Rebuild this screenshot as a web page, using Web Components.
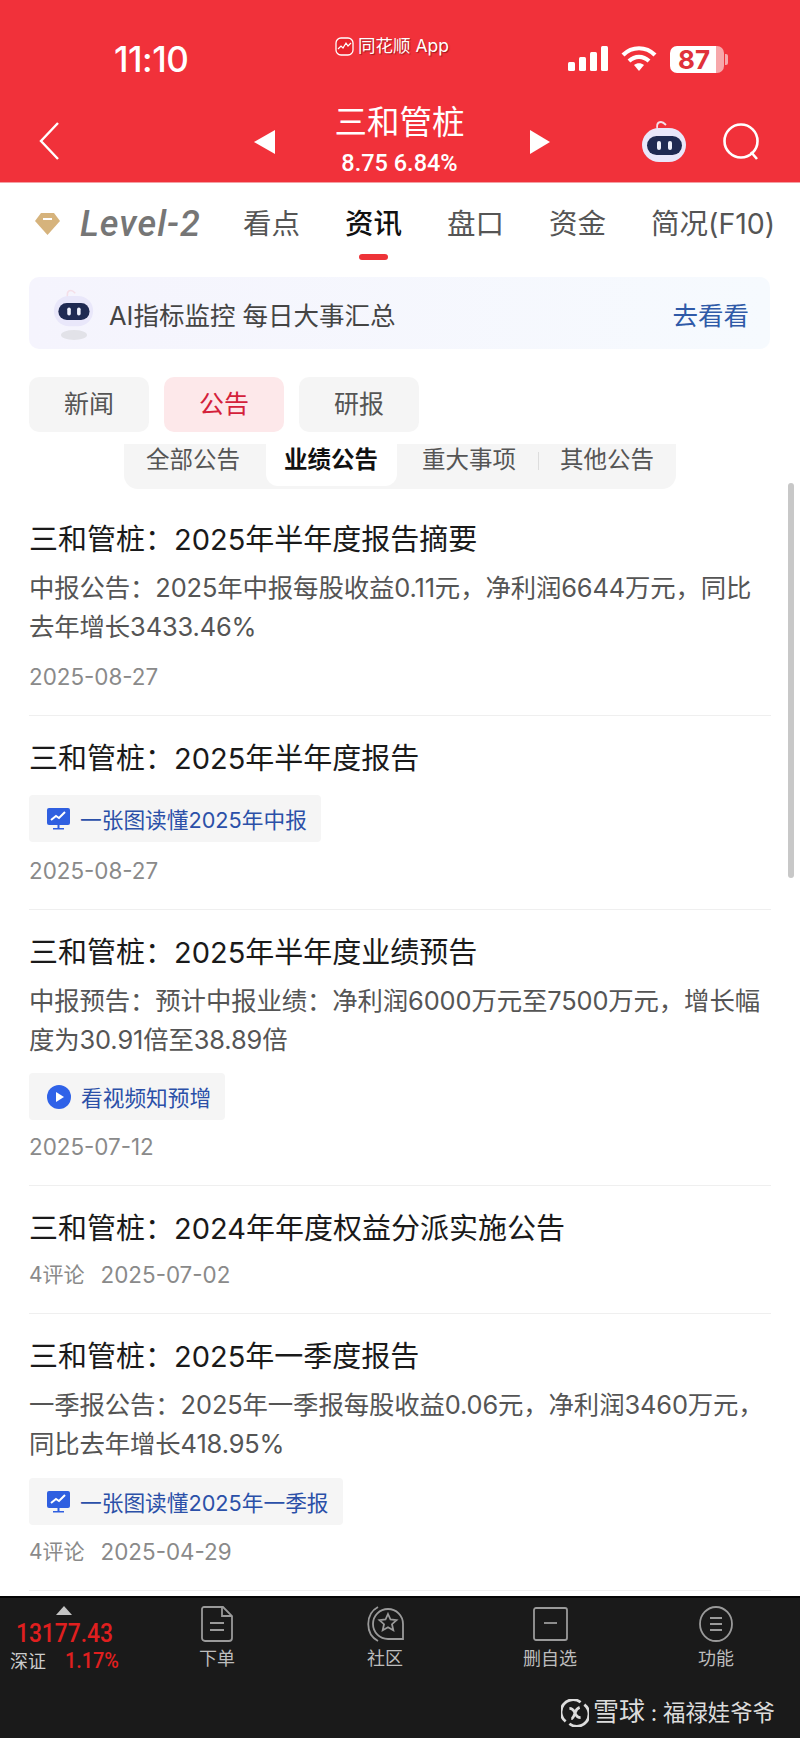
<!DOCTYPE html>
<html lang="zh">
<head>
<meta charset="utf-8">
<title>三和管桩</title>
<style>
  html, body { margin: 0; padding: 0; background: #fff; }
  body { font-family: "Inter", "Noto Sans CJK SC", sans-serif; width: 800px; height: 1738px; overflow: hidden; }
</style>
</head>
<body>
<stock-page>
  <app-header slot="top"></app-header>
  <stock-tabs slot="top"></stock-tabs>
  <ai-banner slot="top"></ai-banner>
  <kind-pills slot="top"></kind-pills>
  <notice-tabs slot="top"></notice-tabs>

  <notice-item heading="三和管桩：2025年半年度报告摘要" date="2025-08-27" gap="16">
    <span slot="desc">中报公告：2025年中报每股收益0.11元，净利润6644万元，同比去年增长3433.46%</span>
  </notice-item>
  <notice-item heading="三和管桩：2025年半年度报告" date="2025-08-27" gap="14">
    <notice-tag slot="tag" icon="chart" style="--top:16px">一张图读懂2025年中报</notice-tag>
  </notice-item>
  <notice-item heading="三和管桩：2025年半年度业绩预告" date="2025-07-12" gap="12">
    <span slot="desc">中报预告：预计中报业绩：净利润6000万元至7500万元，增长幅度为30.91倍至38.89倍</span>
    <notice-tag slot="tag" icon="play" style="--top:14px">看视频知预增</notice-tag>
  </notice-item>
  <notice-item heading="三和管桩：2024年年度权益分派实施公告" comments="4评论" date="2025-07-02" gap="11"></notice-item>
  <notice-item heading="三和管桩：2025年一季度报告" comments="4评论" date="2025-04-29" gap="12">
    <span slot="desc">一季报公告：2025年一季报每股收益0.06元，净利润3460万元，同比去年增长418.95%</span>
    <notice-tag slot="tag" icon="chart" style="--top:15px">一张图读懂2025年一季报</notice-tag>
  </notice-item>

  <bottom-bar slot="bottom"></bottom-bar>
</stock-page>

<script>
const ROBOT = `
  <svg viewBox="0 0 46 46" width="100%" height="100%">
    <path d="M17 13c-2-5-1-9 3-9 2 0 3 1 5 3" fill="none" stroke="#f4dfe8" stroke-width="1.800"/>
    <rect x="1" y="10" width="44" height="34" rx="17" fill="#e9e7fa"/>
    <rect x="6" y="18" width="35" height="19" rx="9.500" fill="#1f2a52"/>
    <rect x="16" y="23" width="4" height="9" rx="2" fill="#eef0fb"/>
    <rect x="27" y="23" width="4" height="9" rx="2" fill="#eef0fb"/>
  </svg>`;

class StockPage extends HTMLElement {
  constructor() {
    super();
    this.attachShadow({ mode: "open" });
    this.shadowRoot.innerHTML = `
      <style>
        :host { display: flex; flex-direction: column; width: 800px; height: 1738px; position: relative; color: #1a1a1a; }
        .list { flex: 1; min-height: 0; overflow: hidden; padding-top: 8px; }
        .scroll { position: absolute; left: 788px; top: 483px; width: 6px; height: 395px; border-radius: 3px; background: #c8c8c8; }
      </style>
      <slot name="top"></slot>
      <div class="list"><slot></slot></div>
      <slot name="bottom"></slot>
      <div class="scroll"></div>
    `;
  }
}

class AppHeader extends HTMLElement {
  constructor() {
    super();
    this.attachShadow({ mode: "open" });
    this.shadowRoot.innerHTML = `
      <style>
        :host { display: block; height: 182px; background: #f1313a; color: #fff; border-bottom: 1px solid #f4a0a4; box-sizing: content-box; position: relative; }
        .status { display: flex; align-items: center; height: 60px; padding-top: 29px; padding-left: 114px; padding-right: 76px; }
        .time { font: 500 35px/1 "Inter", sans-serif; letter-spacing: -.5px; }
        .app { position: absolute; left: 335px; top: 35px; display: flex; align-items: center; gap: 4px; font-size: 17.5px; line-height: 22px; text-shadow: 1px 1px 1px rgba(90,0,0,.55); }
        .icons { margin-left: auto; display: flex; align-items: center; gap: 13px; }
        .batt { position: relative; width: 54px; height: 27px; border-radius: 7px; background: linear-gradient(90deg, #fff 0 86%, #f7a7aa 86%); color: #e0313a; font: 700 26px/27px "Inter", sans-serif; padding-right: 6px; box-sizing: border-box; text-align: center; }
        .batt::after { content: ""; position: absolute; right: -4px; top: 8px; width: 3px; height: 11px; border-radius: 0 2px 2px 0; background: #f7a7aa; }
        .nav { position: absolute; left: 0; right: 0; top: 102px; height: 76px; display: grid; grid-template-columns: 254px 21px 60px 129px 66px 20px 91px 45px 37px 37px; align-items: center; }
        .name { display: flex; flex-direction: column; align-items: center; white-space: nowrap; }
        .name b { font-weight: 400; font-size: 32.5px; line-height: 40px; }
        .name span { font: 500 23.5px/28px "Roboto", sans-serif; margin-top: 6px; }
        svg { display: block; }
        .back { margin-left: 38px; margin-top: 2px; }
        .tri { margin-top: 3px; }
        .bot { width: 46px; height: 46px; margin-top: 2px; }
        .find { margin-top: 3px; }
      </style>
      <div class="status">
        <span class="time">11:10</span>
        <div class="app">
          <svg width="19" height="19" viewBox="0 0 19 19"><rect x="1" y="1" width="17" height="17" rx="5" fill="#e8232c" stroke="#fff" stroke-width="1.3"/><path d="M3 12l3-3 2 2 3-5 2 3 3-3" fill="none" stroke="#fff" stroke-width="1.2"/></svg>
          <span>同花顺 App</span>
        </div>
        <div class="icons">
          <svg width="40" height="26" viewBox="0 0 40 26" fill="#fff"><rect x="0" y="16" width="7" height="9" rx="1.5"/><rect x="11" y="11" width="7" height="14" rx="1.5"/><rect x="22" y="6" width="7" height="19" rx="1.5"/><rect x="33" y="0" width="7" height="25" rx="1.5"/></svg>
          <svg width="36" height="26" viewBox="0 0 36 26" fill="none" stroke="#fff" stroke-width="4.2"><path d="M2 9c9-9 23-9 32 0"/><path d="M8 15c6-5.500 14-5.500 20 0"/><path d="M18 25l-5-6c3-2.500 7-2.500 10 0z" fill="#fff" stroke="none"/></svg>
          <div class="batt">87</div>
        </div>
      </div>
      <div class="nav">
        <svg class="back" width="22" height="38" viewBox="0 0 22 38" fill="none" stroke="#fff" stroke-width="2.4"><path d="M20 1L3 19l17 18"/></svg>
        <svg class="tri" width="21" height="24" viewBox="0 0 21 24" fill="#fff"><path d="M21 0v24L0 12z"/></svg>
        <span></span>
        <div class="name"><b>三和管桩</b><span>8.75 6.84%</span></div>
        <span></span>
        <svg class="tri" width="20" height="24" viewBox="0 0 20 24" fill="#fff"><path d="M0 0v24l20-12z"/></svg>
        <span></span>
        <div class="bot">${ROBOT}</div>
        <span></span>
        <svg class="find" width="37" height="38" viewBox="0 0 37 38" fill="none" stroke="#fff" stroke-width="2.6"><circle cx="18" cy="18" r="16.500"/><path d="M28 29l6 7"/></svg>
      </div>
    `;
  }
}

class StockTabs extends HTMLElement {
  constructor() {
    super();
    this.attachShadow({ mode: "open" });
    this.shadowRoot.innerHTML = `
      <style>
        :host { display: flex; align-items: flex-start; height: 73px; padding-left: 35px; font-size: 28.5px; color: #555; box-sizing: border-box; white-space: nowrap; }
        .lv { display: flex; align-items: center; gap: 20px; width: 208px; height: 82px; }
        .lv i { font: italic 500 36px/1 "Roboto", sans-serif; color: #767676; letter-spacing: 1px; }
        .tab { width: 102px; height: 82px; line-height: 82px; position: relative; flex: none; }
        .tab.on { color: #111; font-weight: 500; }
        .tab.on::after { content: ""; position: absolute; left: 14px; top: 71px; width: 29px; height: 6px; border-radius: 3px; background: #ee3338; }
      </style>
      <div class="lv">
        <svg width="25" height="22" viewBox="0 0 25 22"><path d="M6 0h13l6 8-12.500 14L0 8z" fill="#d6b37c"/><rect x="8" y="5" width="9" height="2" fill="#fff"/></svg>
        <i>Level-2</i>
      </div>
      <span class="tab">看点</span>
      <span class="tab on">资讯</span>
      <span class="tab">盘口</span>
      <span class="tab">资金</span>
      <span class="tab">简况(F10)</span>
    `;
  }
}

class AiBanner extends HTMLElement {
  constructor() {
    super();
    this.attachShadow({ mode: "open" });
    this.shadowRoot.innerHTML = `
      <style>
        :host { display: flex; align-items: center; height: 72px; margin: 21px 30px 0 29px; padding: 0 21px 0 24px; border-radius: 10px; background: linear-gradient(90deg, #f5f4fd, #f6fafe); font-size: 25.5px; color: #444; }
        .bot { width: 41px; height: 54px; margin-right: 15px; margin-top: 2px; display: flex; flex-direction: column; align-items: center; }
        .bot div { width: 41px; height: 41px; }
        .bot span { width: 26px; height: 10px; margin-top: 2px; border-radius: 50%; background: #e2e2e8; }
        a { margin-left: auto; color: #2f5aa8; }
      </style>
      <div class="bot"><div>${ROBOT}</div><span></span></div>
      <span>AI指标监控 每日大事汇总</span>
      <a>去看看</a>
    `;
  }
}

class KindPills extends HTMLElement {
  constructor() {
    super();
    this.attachShadow({ mode: "open" });
    this.shadowRoot.innerHTML = `
      <style>
        :host { display: flex; gap: 15px; margin: 28px 0 0 29px; }
        span { width: 120px; height: 55px; line-height: 55px; text-align: center; border-radius: 10px; background: #f5f5f5; color: #555; font-size: 25px; }
        .on { background: #fde8ea; color: #d4213a; }
      </style>
      <span>新闻</span><span class="on">公告</span><span>研报</span>
    `;
  }
}

class NoticeTabs extends HTMLElement {
  constructor() {
    super();
    this.attachShadow({ mode: "open" });
    this.shadowRoot.innerHTML = `
      <style>
        :host { display: grid; grid-template-columns: repeat(4, 138px); width: 552px; height: 45px; margin: 12px 0 0 124px; border-radius: 0 0 14px 14px; background: #f5f5f5; font-size: 23.5px; color: #555; position: relative; }
        span { text-align: center; line-height: 32px; height: 42px; }
        .on { margin: 0 3.500px; background: #fff; border-radius: 0 0 12px 12px; color: #111; font-weight: 700; }
        .sep { position: absolute; left: 414px; top: 8px; width: 1px; height: 18px; background: #ddd; }
      </style>
      <span>全部公告</span><span class="on">业绩公告</span><span>重大事项</span><span>其他公告</span>
      <div class="sep"></div>
    `;
  }
}

class NoticeTag extends HTMLElement {
  constructor() {
    super();
    this.attachShadow({ mode: "open" });
    const chart = `<svg width="23" height="22" viewBox="0 0 23 22"><path d="M2 0h19a2 2 0 0 1 2 2v13a2 2 0 0 1-2 2H2a2 2 0 0 1-2-2V2a2 2 0 0 1 2-2z" fill="#2f5fe0"/><path d="M4 12l5-4 3 2 6-6" fill="none" stroke="#fff" stroke-width="2"/><path d="M10.500 17h2v3h-2zM6 20h11v1.500H6z" fill="#2f5fe0"/></svg>`;
    const play = `<svg width="24" height="24" viewBox="0 0 24 24"><circle cx="12" cy="12" r="12" fill="#2f62e8"/><path d="M9 7l8 5-8 5z" fill="#fff"/></svg>`;
    this.shadowRoot.innerHTML = `
      <style>
        :host { display: flex; width: fit-content; align-items: center; gap: 10px; height: 47px; margin-top: var(--top, 14px); padding: 0 14px 0 18px; border-radius: 4px; background: #f5f5f5; color: #2b50a8; font-size: 21.7px; white-space: nowrap; }
      </style>
      ${this.getAttribute("icon") === "play" ? play : chart}
      <slot></slot>
    `;
  }
}

class NoticeItem extends HTMLElement {
  constructor() {
    super();
    this.attachShadow({ mode: "open" });
    const comments = this.getAttribute("comments");
    this.shadowRoot.innerHTML = `
      <style>
        :host { display: block; margin: 0 29px; padding: 23px 0 23px; border-bottom: 1px solid #efefef; }
        h3 { margin: 0; font-weight: 400; font-size: 29px; line-height: 40px; color: #1a1a1a; white-space: nowrap; }
        .desc { font-size: 25.4px; line-height: 39px; letter-spacing: -.12px; color: #555; }
        ::slotted([slot="desc"]) { display: block; margin-top: 8px; }
        .meta { display: flex; gap: 16px; margin-top: ${this.getAttribute("gap")}px; font-size: 21px; line-height: 30px; color: #8a8a8a; }
        .date { font-size: 22.4px; }
      </style>
      <h3>${this.getAttribute("heading")}</h3>
      <div class="desc"><slot name="desc"></slot></div>
      <slot name="tag"></slot>
      <div class="meta">${comments ? `<span>${comments}</span>` : ""}<span class="date">${this.getAttribute("date")}</span></div>
    `;
  }
}

class BottomBar extends HTMLElement {
  constructor() {
    super();
    this.attachShadow({ mode: "open" });
    const stroke = `fill="none" stroke="#9a9a9a" stroke-width="1.800"`;
    this.shadowRoot.innerHTML = `
      <style>
        :host { display: block; height: 142px; box-sizing: border-box; flex: none; background: #1a1a1a; border-top: 2px solid #050505; color: #bdbdbd; font-size: 18px; position: relative; }
        .row { display: flex; height: 82px; }
        .quote { width: 136px; position: relative; flex: none; }
        .quote i { position: absolute; left: 56px; top: 8px; width: 0; height: 0; border: 8px solid transparent; border-top: 0; border-bottom: 9px solid #c4c4c4; }
        .idx { position: absolute; left: 16px; top: 21px; font: 500 25px/30px "Roboto", sans-serif; color: #e01f1f; transform: scaleX(.91); transform-origin: 0 0; }
        .sz { position: absolute; left: 10px; top: 52px; line-height: 24px; color: #ccc; }
        .pct { position: absolute; left: 65px; top: 50px; font: 500 22px/26px "Roboto", sans-serif; color: #e01f1f; transform: scaleX(.9); transform-origin: 0 0; }
        .act { position: absolute; top: 8px; width: 80px; display: flex; flex-direction: column; align-items: center; }
        .act svg { height: 36px; display: block; }
        .act span { margin-top: 5px; line-height: 24px; }
        .mark { position: absolute; right: 25px; top: 98px; display: flex; align-items: center; font-size: 22.4px; line-height: 32px; color: #dcdcdc; white-space: nowrap; }
        .mark svg { margin-right: 4px; }
        .mark b { font-weight: 400; font-size: 26px; }
        .mark em { font-style: normal; width: 18px; text-align: center; }
      </style>
      <div class="row">
        <div class="quote">
          <i></i>
          <span class="idx">13177.43</span>
          <span class="sz">深证</span>
          <span class="pct">1.17%</span>
        </div>
      </div>
      <div class="act" style="left:177px">
        <svg width="32" height="36" viewBox="0 0 32 36" ${stroke}><path d="M3 1h19l9 9v22a3 3 0 0 1-3 3H4a3 3 0 0 1-3-3V3a2 2 0 0 1 2-2z"/><path d="M21 1v9h10M9 17h14M9 24h14"/></svg>
        <span>下单</span>
      </div>
      <div class="act" style="left:345px">
        <svg width="37" height="36" viewBox="0 0 37 36" ${stroke}><path d="M11 1C-2 8-2 28 11 35"/><path d="M21 3a15 15 0 0 1 15 15v15H21a15 15 0 0 1 0-30z"/><path d="M21 8l2.500 5.500 6 .7-4.500 4 1.300 6-5.300-3-5.300 3 1.300-6-4.500-4 6-.7z"/></svg>
        <span>社区</span>
      </div>
      <div class="act" style="left:510px">
        <svg width="35" height="34" viewBox="0 0 35 34" ${stroke}><rect x="1" y="1" width="33" height="32" rx="2"/><path d="M11 16h13"/></svg>
        <span>删自选</span>
      </div>
      <div class="act" style="left:676px">
        <svg width="34" height="36" viewBox="0 0 34 36" ${stroke}><ellipse cx="17" cy="18" rx="16" ry="17"/><path d="M11 12h12M11 18h12M11 24h12"/></svg>
        <span>功能</span>
      </div>
      <div class="mark">
        <svg width="28" height="28" viewBox="0 0 30 30" fill="none" stroke="#dcdcdc" stroke-width="3"><path d="M21 3.500A13 13 0 0 0 5 24"/><path d="M9 26.500A13 13 0 0 0 25 6"/><path d="M9 10c4 0 5 3 6 5s2 5 6 5M11 21c2 0 3-3 4-6s2-5 5-6"/></svg>
        <span><b>雪球</b></span><em>:</em><span>福禄娃爷爷</span>
      </div>
    `;
  }
}

customElements.define("stock-page", StockPage);
customElements.define("app-header", AppHeader);
customElements.define("stock-tabs", StockTabs);
customElements.define("ai-banner", AiBanner);
customElements.define("kind-pills", KindPills);
customElements.define("notice-tag", NoticeTag);
customElements.define("notice-tabs", NoticeTabs);
customElements.define("notice-item", NoticeItem);
customElements.define("bottom-bar", BottomBar);
</script>
</body>
</html>
